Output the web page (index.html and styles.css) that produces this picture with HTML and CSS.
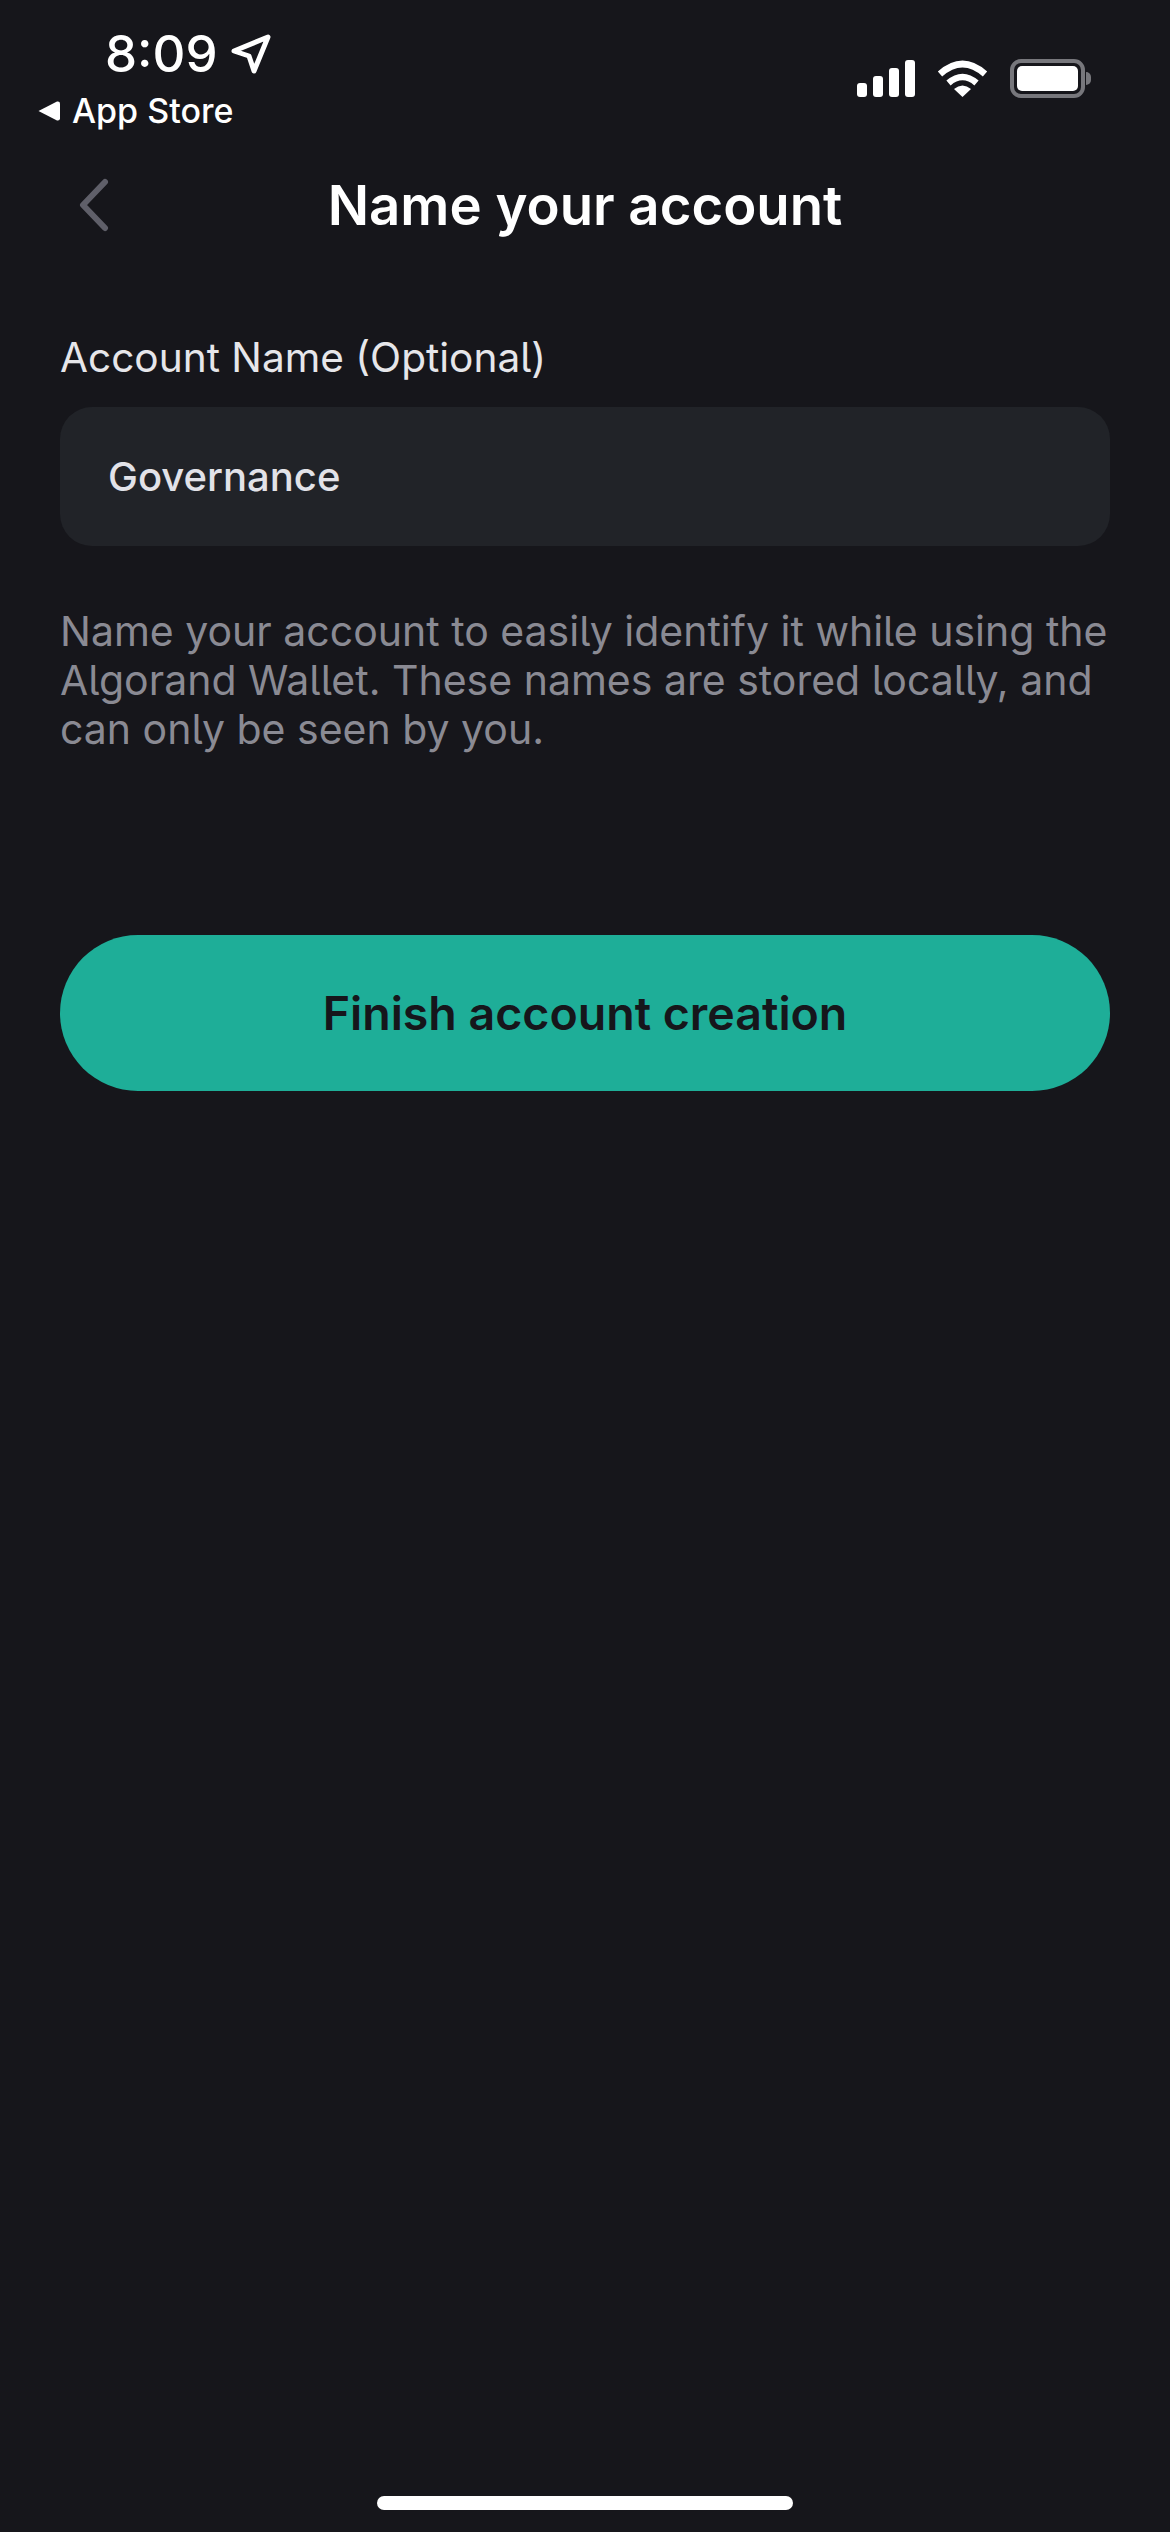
FILE: index.html
```html
<!DOCTYPE html>
<html lang="en">
<head>
  <meta charset="UTF-8" />
  <meta name="viewport" content="width=device-width, initial-scale=1.0"/>
  <title>Name your account</title>
  <link rel="stylesheet" href="styles.css">
</head>
<body>
  <div class="screen">
    <div class="status-bar">
      <div class="status-left">
        <div class="clock">
          <span>8:09</span>
          <svg class="loc-icon" width="40" height="40" viewBox="0 0 40 40">
            <path d="M3 17 L37 3 L23 37 L18 22 Z" fill="none" stroke="#fff" stroke-width="5" stroke-linejoin="round"/>
          </svg>
        </div>
        <div class="back-app">
          <svg width="22" height="20" viewBox="0 0 22 20"><path d="M0.5 10 L19 0.5 Q22 0 22 2.5 V17.5 Q22 20 19 19.5 Z" fill="#fff"/></svg>
          <span>App Store</span>
        </div>
      </div>
      <div class="status-right">
        <svg width="58" height="37" viewBox="0 0 58 37">
          <rect x="0" y="23" width="10" height="14" rx="3" fill="#fff"/>
          <rect x="16" y="16" width="10" height="21" rx="3" fill="#fff"/>
          <rect x="32" y="8" width="10" height="29" rx="3" fill="#fff"/>
          <rect x="48" y="0" width="10" height="37" rx="3" fill="#fff"/>
        </svg>
        <svg width="51" height="37" viewBox="0 0 51 37">
          <path d="M3 14 Q25.5 -6 48 14" fill="none" stroke="#fff" stroke-width="6.5"/>
          <path d="M11.5 23 Q25.5 11 39.5 23" fill="none" stroke="#fff" stroke-width="6.5"/>
          <path d="M17 29 Q25.5 22 34 29 L25.5 37 Z" fill="#fff"/>
        </svg>
        <div class="battery">
          <div class="battery-body"><div class="battery-fill"></div></div>
          <div class="battery-cap"></div>
        </div>
      </div>
    </div>

    <div class="nav-bar">
      <svg class="nav-back" width="34" height="54" viewBox="0 0 34 54">
        <path d="M28 4 L6 27 L28 50" fill="none" stroke="#5f5f69" stroke-width="6" stroke-linecap="round" stroke-linejoin="round"/>
      </svg>
      <h1>Name your account</h1>
    </div>

    <div class="content">
      <label class="field-label">Account Name (Optional)</label>
      <div class="field-input">Governance</div>
      <p class="hint">Name your account to easily identify it while using the Algorand Wallet. These names are stored locally, and can only be seen by you.</p>
      <button class="primary-btn">Finish account creation</button>
    </div>

    <div class="home-indicator"></div>
  </div>
</body>
</html>
```

FILE: styles.css
```css
html, body {
  margin: 0;
  padding: 0;
}
body {
  background: #16161b;
  font-family: 'Inter', 'Liberation Sans', sans-serif;
  font-feature-settings: "cv05";
  color: #fff;
}
.screen {
  width: 1170px;
  height: 2532px;
  display: flex;
  flex-direction: column;
  overflow: hidden;
}
.status-bar {
  height: 132px;
  box-sizing: border-box;
  padding: 27px 79px 0 38px;
  display: flex;
  justify-content: space-between;
}
.status-left {
  display: flex;
  flex-direction: column;
}
.clock {
  display: flex;
  align-items: center;
  gap: 13px;
  margin-left: 67px;
  font-size: 51px;
  line-height: 54px;
  font-weight: 500;
}
.back-app {
  display: flex;
  align-items: center;
  gap: 12px;
  margin-top: 10px;
  font-size: 34px;
  line-height: 40px;
  font-weight: 500;
}
.status-right {
  display: flex;
  align-items: center;
  gap: 22px;
  margin-top: 32px;
  align-self: flex-start;
}
.battery {
  display: flex;
  align-items: center;
  gap: 1px;
}
.battery-body {
  width: 75px;
  height: 39px;
  box-sizing: border-box;
  border: 4px solid #77777c;
  border-radius: 11px;
  padding: 3px;
}
.battery-fill {
  width: 100%;
  height: 100%;
  background: #fff;
  border-radius: 5px;
}
.battery-cap {
  width: 5px;
  height: 13px;
  background: #77777c;
  border-radius: 0 5px 5px 0;
}
.nav-bar {
  height: 146px;
  display: flex;
  align-items: center;
  justify-content: center;
  position: relative;
}
.nav-bar h1 {
  margin: 0;
  font-size: 54.5px;
  font-weight: 600;
}
.nav-back {
  position: absolute;
  left: 77px;
  top: 46px;
}
.content {
  padding: 55px 60px 0;
  display: flex;
  flex-direction: column;
}
.field-label {
  font-size: 40.6px;
  line-height: 50px;
  color: #e6e6ea;
}
.field-input {
  margin-top: 24px;
  height: 139px;
  box-sizing: border-box;
  padding: 0 48px 0;
  display: flex;
  align-items: center;
  background: #212328;
  border-radius: 32px;
  font-size: 40px;
  font-weight: 500;
  color: #e2e2e8;
}
.hint {
  margin: 61px 0 0;
  font-size: 41px;
  line-height: 49px;
  color: #8a8a93;
}
.primary-btn {
  margin-top: 181px;
  height: 156px;
  border: none;
  border-radius: 78px;
  background: #1eae98;
  color: #16161b;
  font-family: inherit;
  font-size: 46.5px;
  font-weight: 600;
}
.home-indicator {
  width: 416px;
  height: 14px;
  border-radius: 7px;
  background: #fff;
  margin: auto auto 22px;
}
```
